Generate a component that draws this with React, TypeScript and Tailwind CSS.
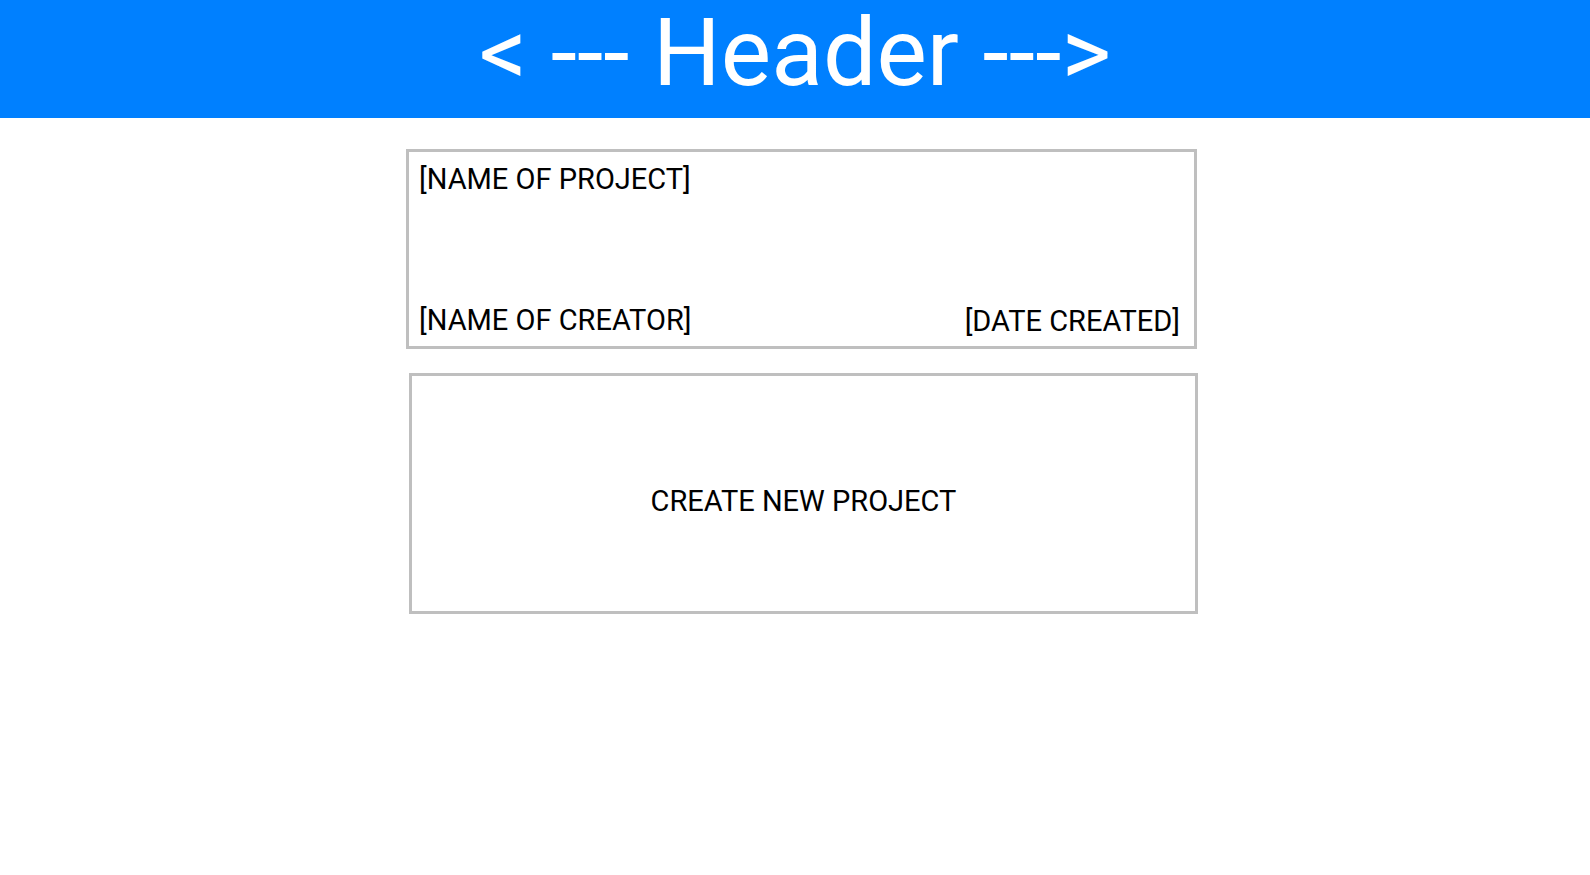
import React from "react";

export default function App() {
  return (
    <div className="w-[1590px] h-[875px] bg-white" style={{ fontFamily: "Roboto, 'Liberation Sans', sans-serif" }}>
      <header className="h-[118px] bg-[#0080ff] text-center">
        <h1 className="text-white text-[95px] leading-[106px] font-normal">&lt; --- Header ---&gt;</h1>
      </header>
      <div className="ml-[406px] mt-[31px] w-[791px] h-[200px] border-[3px] border-[#bfbfbf] flex flex-col justify-between px-[10px] pt-[13px] pb-[11px] text-black text-[29px] leading-none">
        <div>[NAME OF PROJECT]</div>
        <div className="flex justify-between items-end">
          <span>[NAME OF CREATOR]</span>
          <span className="mr-[4px] -mb-[1px]">[DATE CREATED]</span>
        </div>
      </div>
      <div className="ml-[409px] mt-[24px] w-[789px] h-[241px] border-[3px] border-[#bfbfbf] flex items-center justify-center text-black text-[29px] leading-none">
        <span className="mt-[16px]">CREATE NEW PROJECT</span>
      </div>
    </div>
  );
}
